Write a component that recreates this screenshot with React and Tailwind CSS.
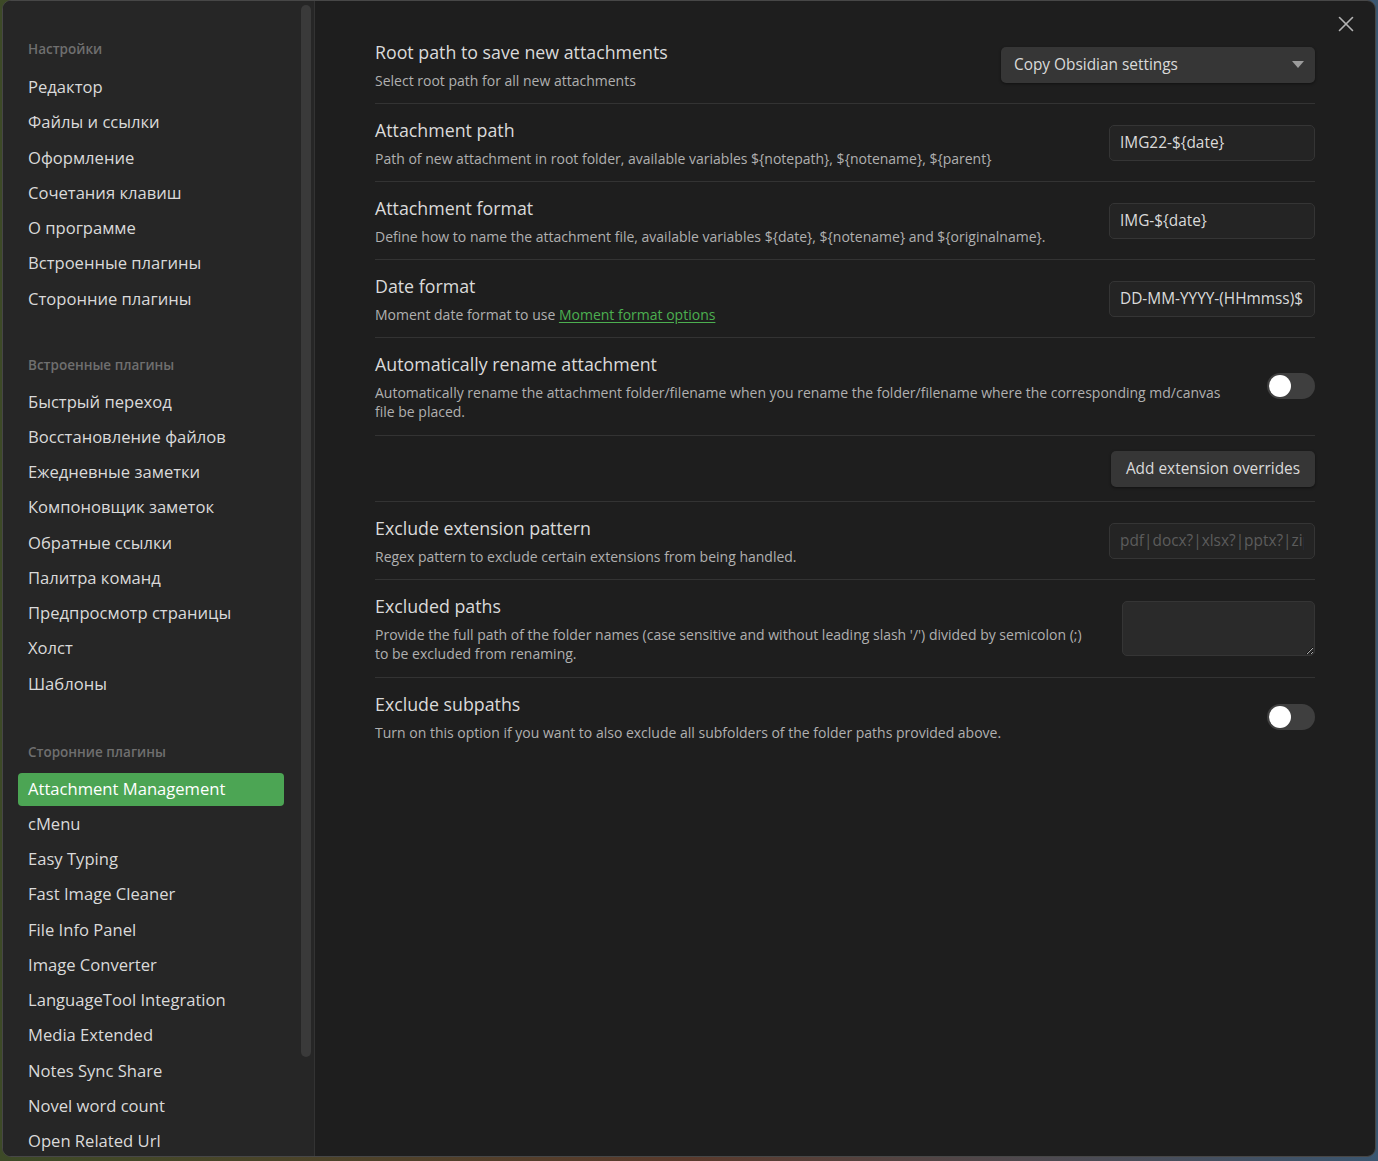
import React from 'react';
import { X } from 'lucide-react';

const settingsNav = [
  'Редактор',
  'Файлы и ссылки',
  'Оформление',
  'Сочетания клавиш',
  'О программе',
  'Встроенные плагины',
  'Сторонние плагины',
];

const corePlugins = [
  'Быстрый переход',
  'Восстановление файлов',
  'Ежедневные заметки',
  'Компоновщик заметок',
  'Обратные ссылки',
  'Палитра команд',
  'Предпросмотр страницы',
  'Холст',
  'Шаблоны',
];

const communityPlugins = [
  'Attachment Management',
  'cMenu',
  'Easy Typing',
  'Fast Image Cleaner',
  'File Info Panel',
  'Image Converter',
  'LanguageTool Integration',
  'Media Extended',
  'Notes Sync Share',
  'Novel word count',
  'Open Related Url',
];

const font = { fontFamily: '"Open Sans", "Noto Sans", sans-serif' };

function NavSection({ title, items, active, className, listClass }) {
  return (
    <div className={className}>
      <div className="h-[20px] pl-[10px] text-[13.5px] leading-[20px] font-semibold text-[#6f6f6f]">
        {title}
      </div>
      <ul className={listClass}>
        {items.map((item) => (
          <li
            key={item}
            className={
              'mb-[2.25px] flex h-[33px] items-center rounded-[4px] px-[10px] text-[16.6px] whitespace-nowrap ' +
              (item === active ? 'bg-[#4ca554] text-white' : 'text-[#dadada]')
            }
          >
            {item}
          </li>
        ))}
      </ul>
    </div>
  );
}

function Toggle() {
  return (
    <div className="flex h-[26px] w-[48px] shrink-0 items-center rounded-full bg-[#3f3f3f] pl-[2px]">
      <div className="h-[22px] w-[22px] rounded-full bg-white" />
    </div>
  );
}

function TextInput({ value, placeholder }) {
  return (
    <input
      readOnly
      value={value}
      placeholder={placeholder}
      className="h-[36px] w-[206px] shrink-0 rounded-[5px] border border-[#353535] bg-[#242424] px-[10px] text-[15.4px] text-[#dadada] outline-none placeholder:text-[#5c5c5c]"
      style={font}
    />
  );
}

function SettingRow({ name, desc, control, first, tall }) {
  return (
    <div
      className={
        'flex items-center gap-[26px] pt-[14px] ' +
        (tall ? 'pb-[14.5px] ' : 'pb-[13.5px] ') +
        (first ? '' : 'border-t border-[#333333]')
      }
    >
      <div className="flex-1">
        <div className="text-[17.8px] leading-[24px] text-[#dadada]">{name}</div>
        <div className="mt-[6.5px] text-[14px] leading-[19px] text-[#b0b0b0]">{desc}</div>
      </div>
      {control}
    </div>
  );
}

export default function App() {
  return (
    <div
      className="h-[1161px] w-full overflow-hidden bg-gradient-to-r from-[#3d4a27] via-[#5a3a2c] to-[#3b5670]"
      style={font}
    >
      <div className="relative ml-[2px] flex h-[1157px] w-[1374px] overflow-hidden rounded-[9px] border border-[#474747] bg-[#1e1e1e]">
        {/* sidebar */}
        <div className="flex h-full w-[312px] shrink-0 border-r border-[#333333] bg-[#262626]">
          <nav className="flex-1 overflow-hidden pl-[15px] pr-[17px] pt-[38px]">
            <NavSection title="Настройки" items={settingsNav} listClass="mt-[12px]" />
            <NavSection
              title="Встроенные плагины"
              items={corePlugins}
              className="mt-[39px]"
              listClass="mt-[11px]"
            />
            <NavSection
              title="Сторонние плагины"
              items={communityPlugins}
              active="Attachment Management"
              className="mt-[41px]"
              listClass="mt-[11px]"
            />
          </nav>
          <div className="mr-[2px] w-[11px] pt-[4px]">
            <div className="h-[1052px] w-[10px] rounded-full bg-[#3a3a3a]" />
          </div>
        </div>

        {/* content */}
        <div className="flex-1 px-[60px] pt-[25px]">
          <SettingRow
            first
            name="Root path to save new attachments"
            desc="Select root path for all new attachments"
            control={
              <div className="flex h-[36px] w-[314px] shrink-0 items-center justify-between rounded-[5px] bg-[#363636] pl-[13px] pr-[11px] text-[15.4px] text-[#dadada] shadow-[0_1px_3px_rgba(0,0,0,0.45)]">
                <span>Copy Obsidian settings</span>
                <svg width="12" height="7" viewBox="0 0 12 7">
                  <path d="M0 0 L12 0 L6 7 Z" fill="#9c9c9c" />
                </svg>
              </div>
            }
          />
          <SettingRow
            name="Attachment path"
            desc="Path of new attachment in root folder, available variables ${notepath}, ${notename}, ${parent}"
            control={<TextInput value="IMG22-${date}" />}
          />
          <SettingRow
            name="Attachment format"
            desc="Define how to name the attachment file, available variables ${date}, ${notename} and ${originalname}."
            control={<TextInput value="IMG-${date}" />}
          />
          <SettingRow
            name="Date format"
            desc={
              <>
                Moment date format to use{' '}
                <span className="text-[#4caf50] underline underline-offset-2">Moment format options</span>
              </>
            }
            control={<TextInput value="DD-MM-YYYY-(HHmmss)$" />}
          />
          <SettingRow
            tall
            name="Automatically rename attachment"
            desc={
              <>
                Automatically rename the attachment folder/filename when you rename the folder/filename where the corresponding md/canvas
                <br />
                file be placed.
              </>
            }
            control={<Toggle />}
          />
          <div className="flex justify-end border-t border-[#333333] py-[14.5px]">
            <button className="h-[36px] w-[204px] rounded-[5px] bg-[#363636] text-[15.4px] text-[#dadada] shadow-[0_1px_3px_rgba(0,0,0,0.45)]">
              Add extension overrides
            </button>
          </div>
          <SettingRow
            name="Exclude extension pattern"
            desc="Regex pattern to exclude certain extensions from being handled."
            control={<TextInput value="" placeholder="pdf|docx?|xlsx?|pptx?|zip|rar" />}
          />
          <SettingRow
            tall
            name="Excluded paths"
            desc="Provide the full path of the folder names (case sensitive and without leading slash '/') divided by semicolon (;) to be excluded from renaming."
            control={
              <textarea
                readOnly
                className="h-[55px] w-[193px] shrink-0 resize rounded-[5px] border border-[#353535] bg-[#2a2a2a] outline-none"
              />
            }
          />
          <SettingRow
            name="Exclude subpaths"
            desc="Turn on this option if you want to also exclude all subfolders of the folder paths provided above."
            control={<Toggle />}
          />
        </div>

        <button className="absolute right-[16px] top-[10px] text-[#b3b3b3]">
          <X size={26} strokeWidth={1.5} />
        </button>
      </div>
    </div>
  );
}
